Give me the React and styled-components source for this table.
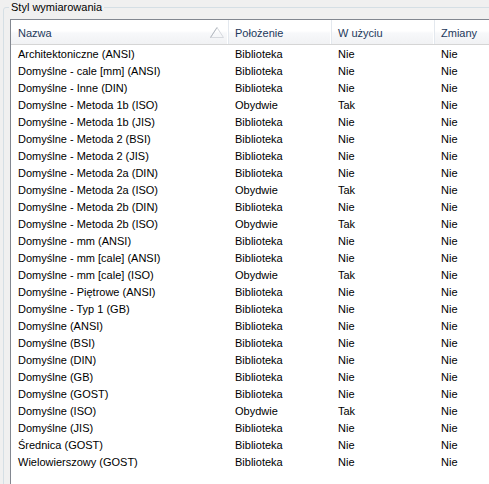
import React from "react";
import styled, { createGlobalStyle } from "styled-components";

const Global = createGlobalStyle`
  html, body { margin: 0; padding: 0; background: #f0f0f0; overflow: hidden; }
  body { font-family: Tahoma, "Liberation Sans", "DejaVu Sans", sans-serif; font-size: 11px; }
`;

const Page = styled.div`
  width: 489px;
  height: 484px;
  padding: 7px 0 0 3px;
  box-sizing: border-box;
  overflow: hidden;
`;

const Group = styled.div`
  position: relative;
  width: 520px;
  height: 520px;
  border: 1px solid #d5dfe5;
  border-radius: 3px;
  padding: 11px 0 0 6px;
  box-sizing: border-box;
`;

const GroupLabel = styled.span`
  position: absolute;
  top: -8px;
  left: 5px;
  padding: 0 2px;
  background: #f0f0f0;
  color: #000;
  font-size: 11px;
  line-height: 14px;
`;

const List = styled.div`
  width: 600px;
  height: 600px;
  background: #fff;
  border: 1px solid #828790;
  box-sizing: border-box;
`;

const Header = styled.div`
  display: grid;
  grid-template-columns: 218px 103px 103px 1fr;
  height: 24px;
  background: linear-gradient(#ffffff 0%, #ffffff 45%, #f7f8fa 55%, #f1f2f4 100%);
  border-bottom: 1px solid #d5d5d5;
`;

const HeadCell = styled.div`
  position: relative;
  display: flex;
  align-items: center;
  padding-left: ${(p) => (p.$first ? "7px" : "6px")};
  padding-top: 1px;
  color: #1e395b;
  font-size: 11px;
  border-right: 1px solid #e3e8ee;
  box-shadow: inset -1px 0 0 #fff;
`;

const SortArrow = styled.svg`
  position: absolute;
  right: 4px;
  top: 7px;
`;

const Row = styled.div`
  display: grid;
  grid-template-columns: 218px 103px 103px 1fr;
  height: 17px;
  align-items: center;
  font-size: 11px;
  color: #000;
`;

const Cell = styled.div`
  padding-left: ${(p) => (p.$first ? "7px" : "6px")};
  padding-top: 1px;
  white-space: nowrap;
  line-height: 16px;
`;

const rows = [
  ["Architektoniczne (ANSI)", "Biblioteka", "Nie", "Nie"],
  ["Domyślne - cale [mm] (ANSI)", "Biblioteka", "Nie", "Nie"],
  ["Domyślne - Inne (DIN)", "Biblioteka", "Nie", "Nie"],
  ["Domyślne - Metoda 1b (ISO)", "Obydwie", "Tak", "Nie"],
  ["Domyślne - Metoda 1b (JIS)", "Biblioteka", "Nie", "Nie"],
  ["Domyślne - Metoda 2 (BSI)", "Biblioteka", "Nie", "Nie"],
  ["Domyślne - Metoda 2 (JIS)", "Biblioteka", "Nie", "Nie"],
  ["Domyślne - Metoda 2a (DIN)", "Biblioteka", "Nie", "Nie"],
  ["Domyślne - Metoda 2a (ISO)", "Obydwie", "Tak", "Nie"],
  ["Domyślne - Metoda 2b (DIN)", "Biblioteka", "Nie", "Nie"],
  ["Domyślne - Metoda 2b (ISO)", "Obydwie", "Tak", "Nie"],
  ["Domyślne - mm (ANSI)", "Biblioteka", "Nie", "Nie"],
  ["Domyślne - mm [cale] (ANSI)", "Biblioteka", "Nie", "Nie"],
  ["Domyślne - mm [cale] (ISO)", "Obydwie", "Tak", "Nie"],
  ["Domyślne - Piętrowe (ANSI)", "Biblioteka", "Nie", "Nie"],
  ["Domyślne - Typ 1 (GB)", "Biblioteka", "Nie", "Nie"],
  ["Domyślne (ANSI)", "Biblioteka", "Nie", "Nie"],
  ["Domyślne (BSI)", "Biblioteka", "Nie", "Nie"],
  ["Domyślne (DIN)", "Biblioteka", "Nie", "Nie"],
  ["Domyślne (GB)", "Biblioteka", "Nie", "Nie"],
  ["Domyślne (GOST)", "Biblioteka", "Nie", "Nie"],
  ["Domyślne (ISO)", "Obydwie", "Tak", "Nie"],
  ["Domyślne (JIS)", "Biblioteka", "Nie", "Nie"],
  ["Średnica (GOST)", "Biblioteka", "Nie", "Nie"],
  ["Wielowierszowy (GOST)", "Biblioteka", "Nie", "Nie"],
];

export default function App() {
  return (
    <Page>
      <Global />
      <Group>
        <GroupLabel>Styl wymiarowania</GroupLabel>
        <List>
          <Header>
            <HeadCell $first>
              Nazwa
              <SortArrow width="14" height="11" viewBox="0 0 14 11">
                <path d="M0.5 10.5 L7 0.5 L13.5 10.5 Z" fill="none" stroke="#d6d9de" strokeWidth="1" />
                <path d="M0.5 10.5 L7 0.5" fill="none" stroke="#b4b9c0" strokeWidth="1" />
              </SortArrow>
            </HeadCell>
            <HeadCell>Położenie</HeadCell>
            <HeadCell>W użyciu</HeadCell>
            <HeadCell>Zmiany</HeadCell>
          </Header>
          {rows.map((r, i) => (
            <Row key={i}>
              <Cell $first>{r[0]}</Cell>
              <Cell>{r[1]}</Cell>
              <Cell>{r[2]}</Cell>
              <Cell>{r[3]}</Cell>
            </Row>
          ))}
        </List>
      </Group>
    </Page>
  );
}
